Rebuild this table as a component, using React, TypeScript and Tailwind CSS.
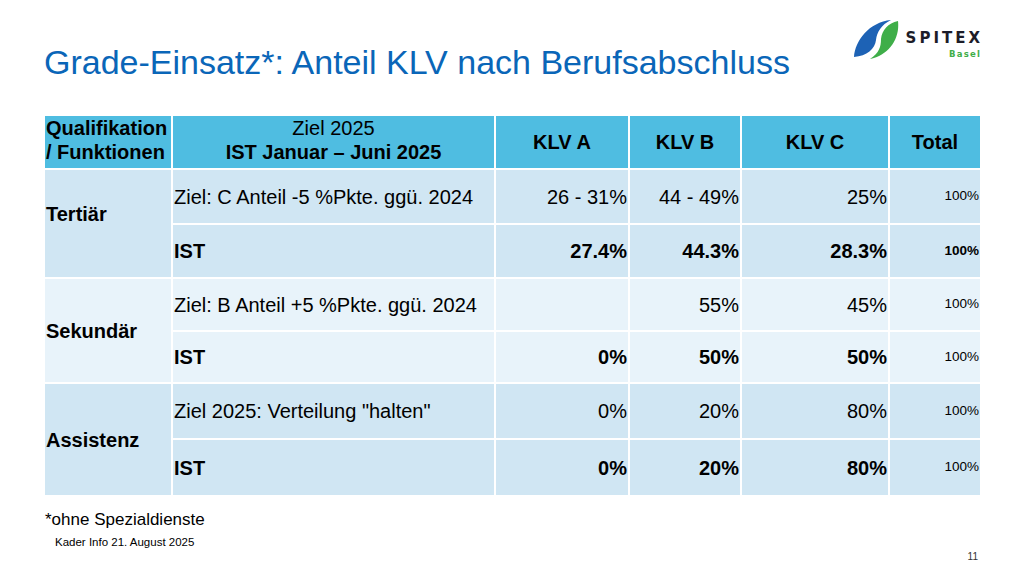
import React from "react";

const dark = "bg-[#d0e6f3]";
const light = "bg-[#e8f3fa]";

function Logo() {
  return (
    <div className="flex items-start">
      <svg width="46" height="41" viewBox="0 0 46 41" className="mt-[1px]">
        <path d="M1,38 C2,22 16,3 38,1 C28,6 24,13 23,21 C22,30 14,37 1,38 Z" fill="#1d62b5" />
        <path d="M45,2 C47,20 36,36 17,40 C26,34 28,28 28,20 C29,11 35,4 45,2 Z" fill="#3fae49" />
      </svg>
      <div className="flex flex-col items-end ml-[7px] mt-[13px]">
        <div className="text-[15px] leading-[15px] font-bold tracking-[3px] text-[#1c1c28] mr-[-3px]" style={{ fontFamily: "'DejaVu Sans', sans-serif" }}>SPITEX</div>
        <div className="text-[8.5px] leading-[10px] font-bold text-[#3fae49] tracking-[1.2px] mr-[-1px] mt-[3px]" style={{ fontFamily: "'DejaVu Sans', sans-serif" }}>Basel</div>
      </div>
    </div>
  );
}

function Cell({ bg, children, className = "" }: { bg: string; children?: React.ReactNode; className?: string }) {
  return <div className={`${bg} flex items-center ${className}`}>{children}</div>;
}

export default function App() {
  const rows = [
    {
      label: "Tertiär",
      bg: dark,
      h: ["h-[53px]", "h-[52px]"],
      lab: "pb-[20px]",
      ziel: "Ziel: C Anteil -5 %Pkte. ggü. 2024",
      z: ["26 - 31%", "44 - 49%", "25%"],
      ist: ["27.4%", "44.3%", "28.3%"],
      totBold: true,
    },
    {
      label: "Sekundär",
      bg: light,
      h: ["h-[51px]", "h-[50px]"],
      lab: "",
      ziel: "Ziel: B Anteil +5 %Pkte. ggü. 2024",
      z: ["", "55%", "45%"],
      ist: ["0%", "50%", "50%"],
      totBold: false,
    },
    {
      label: "Assistenz",
      bg: dark,
      h: ["h-[54px]", "h-[55px]"],
      lab: "",
      ziel: 'Ziel 2025: Verteilung "halten"',
      z: ["0%", "20%", "80%"],
      ist: ["0%", "20%", "80%"],
      totBold: false,
    },
  ];

  return (
    <div className="w-[1024px] h-[576px] bg-white text-black flex flex-col" style={{ fontFamily: "'Liberation Sans', Arial, sans-serif" }}>
      <div className="flex justify-between items-start pl-[44px] pr-[44px] pt-[18px]">
        <h1 className="text-[34px] leading-[36px] text-[#0a66b8] mt-[26px]">Grade-Einsatz*: Anteil KLV nach Berufsabschluss</h1>
        <Logo />
      </div>
      <div className="ml-[45px] mt-[36px] w-[935px] grid grid-cols-[126px_321px_132px_110px_146px_90px] gap-[2px]">
        <div className="bg-[#4fbde1] h-[52px] flex flex-col justify-center text-[20px] leading-[24px] font-bold pl-[1px] pb-[4px]">
          <div>Qualifikation</div>
          <div>/ Funktionen</div>
        </div>
        <div className="bg-[#4fbde1] h-[52px] flex flex-col justify-center items-center text-[20px] leading-[24px] pb-[4px]">
          <div>Ziel 2025</div>
          <div className="font-bold">IST Januar – Juni 2025</div>
        </div>
        {["KLV A", "KLV B", "KLV C", "Total"].map((t) => (
          <div key={t} className="bg-[#4fbde1] h-[52px] flex items-center justify-center text-[20px] font-bold">
            {t}
          </div>
        ))}
        {rows.map((r) => (
          <React.Fragment key={r.label}>
            <div className={`${r.bg} row-span-2 flex items-center pl-[1px] text-[20px] font-bold ${r.lab}`}>{r.label}</div>
            <Cell bg={r.bg} className={`${r.h[0]} pl-[1px] text-[20px]`}>{r.ziel}</Cell>
            {r.z.map((v, i) => (
              <Cell key={i} bg={r.bg} className={`${r.h[0]} justify-end pr-[1px] text-[20px]`}>{v}</Cell>
            ))}
            <Cell bg={r.bg} className={`${r.h[0]} justify-end pr-[1px] text-[13.5px]`}>100%</Cell>
            <Cell bg={r.bg} className={`${r.h[1]} pl-[1px] text-[20px] font-bold`}>IST</Cell>
            {r.ist.map((v, i) => (
              <Cell key={i} bg={r.bg} className={`${r.h[1]} justify-end pr-[1px] text-[20px] font-bold`}>{v}</Cell>
            ))}
            <Cell bg={r.bg} className={`${r.h[1]} justify-end pr-[1px] text-[13.5px] ${r.totBold ? "font-bold" : ""}`}>100%</Cell>
          </React.Fragment>
        ))}
      </div>
      <div className="ml-[45px] mt-[15px] text-[17px] leading-[19px]">*ohne Spezialdienste</div>
      <div className="ml-[55px] mt-[7px] text-[11.5px] leading-[13px]">Kader Info 21. August 2025</div>
      <div className="flex justify-end pr-[46px] mt-[2px] text-[10px] leading-[12px] text-[#333]">11</div>
    </div>
  );
}
